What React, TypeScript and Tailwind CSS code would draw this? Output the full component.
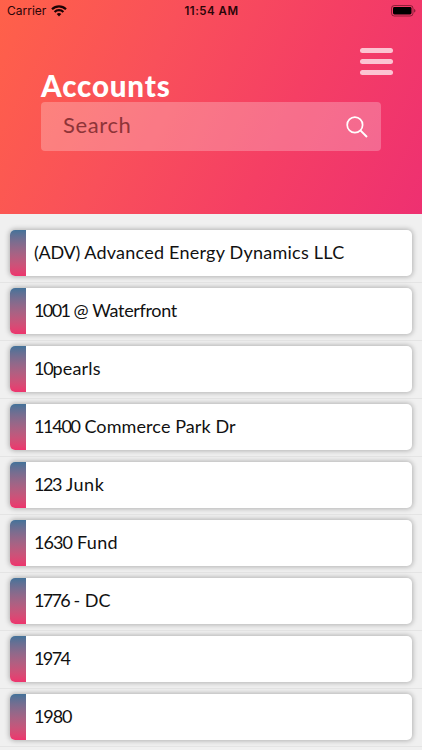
import React from 'react';

const ACCOUNTS = [
    { lead: '(ADV)', leadTracking: 'tracking-[-0.3px]', rest: ' Advanced Energy Dynamics LLC', restTracking: 'tracking-[0.24px]' },
    { lead: '1001', leadTracking: 'tracking-[-1.6px]', rest: ' @ Waterfront', restTracking: 'tracking-[-0.35px]' },
    { lead: '10', leadTracking: 'tracking-[-1.2px]', rest: 'pearls', restTracking: 'tracking-[0.2px]' },
    { lead: '11400', leadTracking: 'tracking-[-1.3px]', rest: ' Commerce Park Dr', restTracking: 'tracking-[0.1px]' },
    { lead: '123', leadTracking: 'tracking-[-1.4px]', rest: ' Junk', restTracking: 'tracking-[0.5px]' },
    { lead: '1630', leadTracking: 'tracking-[-0.9px]', rest: ' Fund', restTracking: 'tracking-[0.3px]' },
    { lead: '1776', leadTracking: 'tracking-[-1.7px]', rest: ' - DC', restTracking: 'tracking-[0px]' },
    { lead: '1974', leadTracking: 'tracking-[-1.6px]', rest: '', restTracking: '' },
    { lead: '1980', leadTracking: 'tracking-[-1.1px]', rest: '', restTracking: '' },
];

type Account = typeof ACCOUNTS[number];

const StatusBar = () => (
    <div className="h-[22px] grid grid-cols-3 items-center pl-[7px] pr-[6px] font-['Inter','Liberation_Sans',sans-serif] text-[#2b0508]">
        <div className="flex items-center gap-[4.5px]">
            <span className="text-[12px] leading-none">Carrier</span>
            <svg width="16" height="12" viewBox="0 0 16 12" fill="none" stroke="#1c0204" strokeWidth="2.2">
                <path d="M1 4.2a10 10 0 0 1 14 0" />
                <path d="M3.6 7a6.3 6.3 0 0 1 8.8 0" />
                <path d="M8 11.4 5.7 9.1a3.3 3.3 0 0 1 4.6 0Z" fill="#1c0204" stroke="none" />
            </svg>
        </div>
        <span className="pt-px text-center text-[11.5px] leading-none font-semibold tracking-[0.5px] whitespace-nowrap">11:54 AM</span>
        <svg className="justify-self-end" width="25" height="12" viewBox="0 0 25 12">
            <rect x="0.5" y="0.5" width="21.5" height="10.5" rx="2.8" fill="none" stroke="#2b0508" strokeOpacity="0.5" />
            <rect x="2" y="2" width="18.5" height="7.5" rx="1.4" fill="#000" />
            <path d="M23.2 4v3.6c.8-.3 1.2-1 1.2-1.8s-.4-1.5-1.2-1.8Z" fill="#2b0508" fillOpacity="0.6" />
        </svg>
    </div>
);

const AccountRow = ({ account }: { account: Account }) => (
    <li className="h-[58px] pt-[5.4px] px-[10.4px] border-b border-[#e4e4e4] shrink-0">
        <div className="h-[46px] flex items-center bg-white rounded-[5px] shadow-[0_0_5px_1px_rgba(0,0,0,0.26)]">
            <div className="w-[15.6px] h-full shrink-0 rounded-l-[5px] bg-linear-to-b from-[#437299] to-[#ee346d]" />
            <p className="pl-2 pb-[2px] text-[18px] leading-none whitespace-pre text-[#111]">
                <span className={account.leadTracking}>{account.lead}</span>
                <span className={account.restTracking}>{account.rest}</span>
            </p>
        </div>
    </li>
);

const App = () => {
    return (
        <div className="w-[422px] h-[750px] overflow-hidden flex flex-col bg-[#f0f0f0] font-['Lato','Open_Sans',sans-serif]">
            <header className="h-[214px] shrink-0 bg-[linear-gradient(116deg,#ff6149_0%,#f9505a_35%,#f53f64_65%,#ee3071_100%)]">
                <StatusBar />
                <div className="h-[53px] pt-[26px] pr-[29px] flex justify-end">
                    <button className="w-[33px] h-[27px] flex flex-col justify-between" aria-label="Menu">
                        <span className="w-full h-[5px] rounded-full bg-white/70" />
                        <span className="w-full h-[5px] rounded-full bg-white/70" />
                        <span className="w-full h-[5px] rounded-full bg-white/70" />
                    </button>
                </div>
                <div className="px-[41px]">
                    <h1 className="h-[27px] leading-[22px] text-[29.5px] tracking-[0.85px] font-black text-white">Accounts</h1>
                    <div className="h-[49px] pl-[22px] pr-[13.5px] flex items-center justify-between rounded bg-white/25">
                        <span className="text-[22px] leading-none tracking-[0.6px] text-[#8e3438] pb-[3px]">Search</span>
                        <svg width="22" height="22" viewBox="0 0 22 22" fill="none" stroke="white" strokeWidth="1.7">
                            <circle cx="8.9" cy="8.9" r="7.7" />
                            <path d="m14.4 14.4 6.6 6.6" strokeWidth="2" />
                        </svg>
                    </div>
                </div>
            </header>
            <ul className="pt-[11px] flex flex-col">
                {ACCOUNTS.map((account) => <AccountRow key={account.lead} account={account} />)}
            </ul>
        </div>
    );
};

export default App;
